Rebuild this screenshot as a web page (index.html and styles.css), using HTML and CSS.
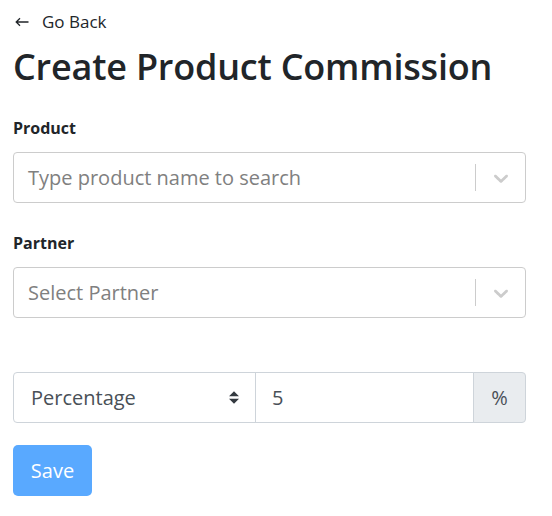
FILE: index.html
```html
<!DOCTYPE html>
<html>
<head>
<meta charset="utf-8">
<link rel="stylesheet" href="styles.css">
</head>
<body>
<div class="page">
  <a class="back" href="#"><span class="arrow"><svg viewBox="0 0 14 10" width="14" height="10"><path d="M13.5 5H1.2M5 1.2L1.2 5 5 8.8" fill="none" stroke="#212529" stroke-width="1.3"/></svg></span><span class="back-text">Go Back</span></a>
  <h1 class="title">Create Product Commission</h1>

  <div class="field">
    <label class="label">Product</label>
    <div class="rselect">
      <div class="rselect-value">Type product name to search</div>
      <div class="rselect-indicators">
        <span class="rselect-sep"></span>
        <span class="rselect-chevron">
          <svg viewBox="0 0 20 20" width="24" height="24"><path d="M4.516 7.548c0.436-0.446 1.043-0.481 1.576 0l3.908 3.747 3.908-3.747c0.533-0.481 1.141-0.446 1.574 0 0.436 0.445 0.408 1.197 0 1.615-0.406 0.418-4.695 4.502-4.695 4.502-0.217 0.223-0.502 0.335-0.787 0.335s-0.57-0.112-0.789-0.335c0 0-4.287-4.084-4.695-4.502s-0.436-1.170 0-1.615z"/></svg>
        </span>
      </div>
    </div>
  </div>

  <div class="field field-second">
    <label class="label">Partner</label>
    <div class="rselect">
      <div class="rselect-value">Select Partner</div>
      <div class="rselect-indicators">
        <span class="rselect-sep"></span>
        <span class="rselect-chevron">
          <svg viewBox="0 0 20 20" width="24" height="24"><path d="M4.516 7.548c0.436-0.446 1.043-0.481 1.576 0l3.908 3.747 3.908-3.747c0.533-0.481 1.141-0.446 1.574 0 0.436 0.445 0.408 1.197 0 1.615-0.406 0.418-4.695 4.502-4.695 4.502-0.217 0.223-0.502 0.335-0.787 0.335s-0.57-0.112-0.789-0.335c0 0-4.287-4.084-4.695-4.502s-0.436-1.170 0-1.615z"/></svg>
        </span>
      </div>
    </div>
  </div>

  <div class="igroup">
    <div class="ig-select">
      <span>Percentage</span>
      <svg class="updown" viewBox="0 0 4 5" width="10" height="13"><path d="M2 0L0 2h4zm0 5L0 3h4z" fill="#343a40"/></svg>
    </div>
    <div class="ig-input">5</div>
    <div class="ig-addon">%</div>
  </div>

  <button class="save" type="button">Save</button>
</div>
</body>
</html>
```
FILE: styles.css
```css
* { box-sizing: border-box; }
html, body { margin: 0; padding: 0; background: #fff; }
body {
  font-family: "Open Sans", "Noto Sans", "Liberation Sans", sans-serif;
  color: #212529;
}
.page {
  padding: 8px 26px 0 13px;
}
.back {
  display: flex;
  align-items: center;
  height: 26px;
  color: #212529;
  text-decoration: none;
  font-size: 17px;
}
.arrow {
  display: flex;
  width: 29px;
  padding-left: 2px;
  padding-top: 1px;
}
.title {
  margin: 11px 0 0 0;
  font-size: 36px;
  font-weight: 600;
  line-height: 44px;
  letter-spacing: -0.2px;
}
.field { margin-top: 27px; }
.field-second { margin-top: 28px; }
.label {
  display: block;
  font-size: 16px;
  font-weight: 700;
  line-height: 24px;
  margin-bottom: 12px;
}
.rselect {
  display: flex;
  align-items: center;
  height: 51px;
  border: 1px solid #cccccc;
  border-radius: 4px;
  background: #fff;
}
.rselect-value {
  flex: 1;
  padding-left: 14px;
  font-size: 20px;
  color: #808080;
}
.rselect-indicators {
  display: flex;
  align-items: center;
  align-self: stretch;
}
.rselect-sep {
  width: 1px;
  align-self: stretch;
  margin: 11px 0;
  background: #cccccc;
}
.rselect-chevron {
  display: flex;
  padding: 0 12px 0 13px;
  fill: #cccccc;
}
.igroup {
  display: flex;
  height: 51px;
  margin-top: 54px;
}
.ig-select {
  width: 243px;
  display: flex;
  align-items: center;
  justify-content: space-between;
  padding: 0 16px 0 17px;
  border: 1px solid #ced4da;
  border-radius: 4px 0 0 4px;
  font-size: 20px;
  color: #495057;
}
.ig-input {
  flex: 1;
  display: flex;
  align-items: center;
  padding-left: 16px;
  margin-left: -1px;
  border: 1px solid #ced4da;
  font-size: 20px;
  color: #495057;
}
.ig-addon {
  width: 53px;
  margin-left: -1px;
  display: flex;
  align-items: center;
  justify-content: center;
  border: 1px solid #ced4da;
  border-radius: 0 4px 4px 0;
  background: #e9ecef;
  font-size: 20px;
  color: #495057;
}
.save {
  display: block;
  margin-top: 22px;
  height: 51px;
  width: 79px;
  border: 0;
  border-radius: 5px;
  background: #59a9ff;
  color: #fff;
  font-family: inherit;
  font-size: 20px;
  padding: 0;
}
```
